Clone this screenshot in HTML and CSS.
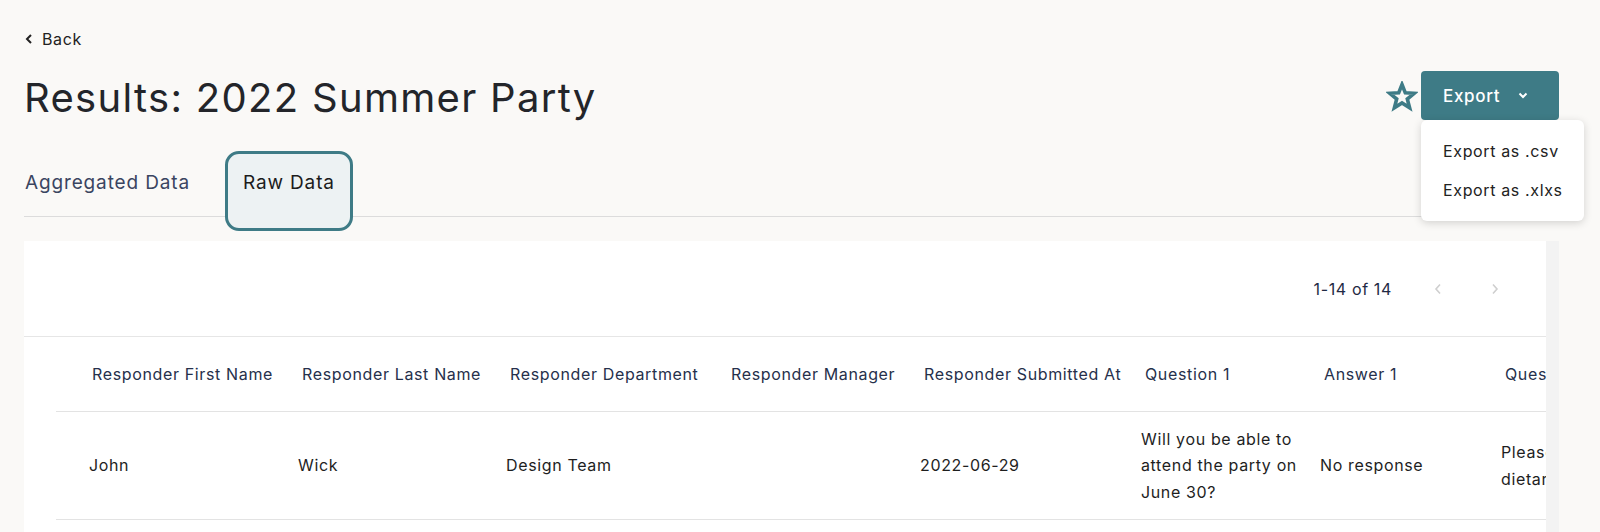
FILE: index.html
```html
<!DOCTYPE html>
<html lang="en">
<head>
    <meta charset="UTF-8">
    <title>Results: 2022 Summer Party</title>
    <link rel="stylesheet" href="styles.css">
</head>
<body>
<div class="page">
    <a class="back" href="#">
        <svg width="8" height="10" viewBox="0 0 8 10"><path d="M6 1 L2 5 L6 9" fill="none" stroke="#222" stroke-width="2"/></svg>
        Back
    </a>

    <div class="title-row">
        <h1>Results: 2022 Summer Party</h1>
        <div class="actions">
            <svg class="star" width="32" height="31" viewBox="0 0 32 31">
                <path d="M16 3.5 L19.3 11.8 L28.3 12.3 L21.3 18 L23.6 26.8 L16 21.9 L8.4 26.8 L10.7 18 L3.7 12.3 L12.7 11.8 Z" fill="none" stroke="#3e7b86" stroke-width="3.6" stroke-linejoin="miter"/>
            </svg>
            <div class="export">
                <button class="export-btn">Export
                    <svg width="10" height="7" viewBox="0 0 10 7"><path d="M1.5 1.5 L5 5 L8.5 1.5" fill="none" stroke="#fff" stroke-width="2"/></svg>
                </button>
                <div class="menu">
                    <div class="menu-item">Export as .csv</div>
                    <div class="menu-item">Export as .xlxs</div>
                </div>
            </div>
        </div>
    </div>

    <div class="tabs">
        <div class="tab">Aggregated Data</div>
        <div class="tab active">Raw Data</div>
    </div>

    <div class="table-wrap">
        <div class="card">
            <div class="pager">
                <span class="count">1-14 of 14</span>
                <span class="pg-btn"><svg width="8" height="12" viewBox="0 0 8 12"><path d="M6 1.5 L2 6 L6 10.5" fill="none" stroke="#cfcfcf" stroke-width="1.6"/></svg></span>
                <span class="pg-btn"><svg width="8" height="12" viewBox="0 0 8 12"><path d="M2 1.5 L6 6 L2 10.5" fill="none" stroke="#cfcfcf" stroke-width="1.6"/></svg></span>
            </div>
            <table class="results">
                <colgroup>
                    <col class="c1"><col class="c2"><col class="c3"><col class="c4">
                    <col class="c5"><col class="c6"><col class="c7"><col class="c8">
                </colgroup>
                <thead>
                    <tr>
                        <th>Responder First Name</th>
                        <th>Responder Last Name</th>
                        <th>Responder Department</th>
                        <th>Responder Manager</th>
                        <th>Responder Submitted At</th>
                        <th>Question 1</th>
                        <th>Answer 1</th>
                        <th>Question 2</th>
                    </tr>
                </thead>
                <tbody>
                    <tr>
                        <td>John</td>
                        <td>Wick</td>
                        <td>Design Team</td>
                        <td></td>
                        <td>2022-06-29</td>
                        <td class="wrap">Will you be able to attend the party on June 30?</td>
                        <td>No response</td>
                        <td>Please list any<br>dietary restrictions</td>
                    </tr>
                </tbody>
            </table>
        </div>
    </div>
</div>
</body>
</html>
```

FILE: styles.css
```css
body { margin: 0; background: #faf9f7; font-family: 'Inter', 'Noto Sans', sans-serif; color: #1e1e1e; letter-spacing: 0.04em; }
.page { padding: 27px 41px 0 24px; }

.back { display: inline-flex; align-items: center; gap: 9px; height: 24px; font-size: 16px; color: #222; text-decoration: none; padding-left: 1px; }

.title-row { display: flex; justify-content: space-between; align-items: flex-start; margin-top: 20px; }
h1 { margin: 3px 0 0; font-size: 40px; line-height: 48px; font-weight: 400; color: #23252a; letter-spacing: 1.3px; }

.actions { display: flex; align-items: center; gap: 3px; }
.star { margin-top: 2px; }
.export { position: relative; }
.export-btn { display: flex; align-items: center; gap: 18px; width: 138px; height: 49px; padding: 0 0 0 22px; border: 0; border-radius: 4px; background: #3e7b86; color: #fff; font-family: inherit; font-size: 17px; font-weight: 500; letter-spacing: 0.04em; }
.menu { position: absolute; top: 100%; left: 0; width: 163px; padding: 12px 0 11px; background: #fff; border-radius: 6px; box-shadow: 0 2px 8px rgba(0, 0, 0, 0.16); z-index: 5; }
.menu-item { height: 39px; line-height: 39px; padding-left: 22px; font-size: 16px; color: #222; white-space: nowrap; }

.tabs { display: flex; gap: 52px; margin-top: 49px; border-bottom: 1px solid #dcdcdc; }
.tab { position: relative; z-index: 0; font-size: 19px; line-height: 24px; letter-spacing: 0.045em; padding-bottom: 20px; margin-bottom: -1px; border-bottom: 2px solid transparent; color: #3a4561; padding-left: 1px; }
.tab.active { color: #1c1c1c; border-bottom-color: #3e7b86; }
.tab.active::before { content: ""; position: absolute; top: -20px; bottom: -16px; left: -17px; right: -18px; border: 3px solid #3e7b86; border-radius: 14px; background: #edf2f3; z-index: -1; }

.table-wrap { margin-top: 24px; padding-right: 13px; background: #f3f3f3; }
.card { background: #fff; overflow: hidden; height: 300px; }
.pager { display: flex; justify-content: flex-end; align-items: center; height: 95px; padding-right: 31px; border-bottom: 1px solid #e6e6e6; }
.count { font-size: 16px; color: #1f2a44; margin-right: 26px; }
.pg-btn { display: flex; justify-content: center; align-items: center; width: 40px; height: 40px; }
.pg-btn + .pg-btn { margin-left: 17px; }

.results { table-layout: fixed; border-collapse: collapse; width: 1645px; margin-left: 32px; }
.c1 { width: 242px; } .c2 { width: 208px; } .c3 { width: 221px; } .c4 { width: 193px; }
.c5 { width: 221px; } .c6 { width: 179px; } .c7 { width: 181px; } .c8 { width: 200px; }
th, td { text-align: left; padding: 0; border-bottom: 1px solid #e3e3e3; vertical-align: middle; }
th { height: 74px; padding-left: 4px; font-size: 16px; font-weight: 400; color: #26304b; white-space: nowrap; }
td { height: 107px; font-size: 16px; line-height: 26.5px; color: #1e1e1e; }
th:first-child { padding-left: 36px; }
td:first-child { padding-left: 33px; }
td.wrap { padding-right: 10px; }
```
